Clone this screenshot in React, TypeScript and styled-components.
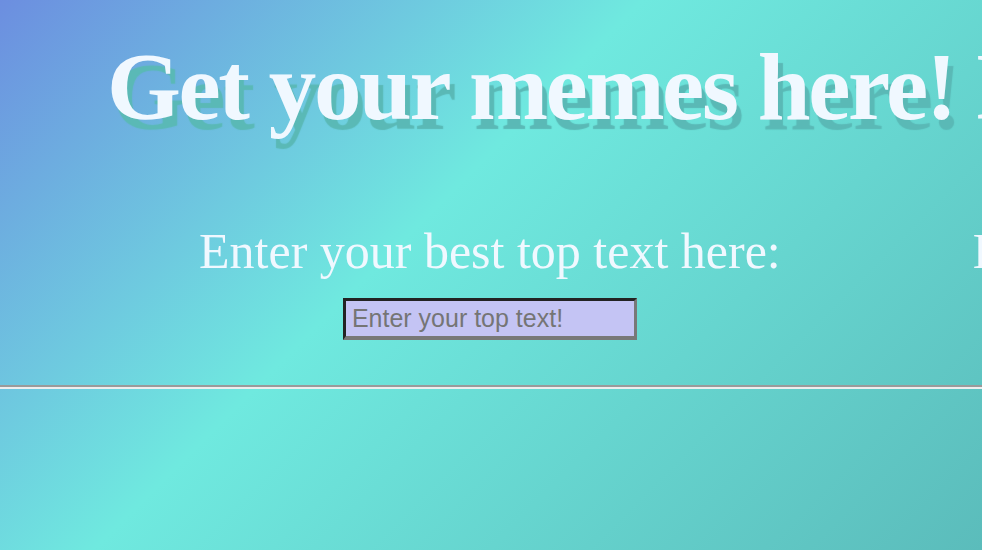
import React from "react";
import styled, { createGlobalStyle } from "styled-components";

const Global = createGlobalStyle`
  html, body {
    margin: 0;
    padding: 0;
    overflow: hidden;
  }
  body {
    font-family: "Liberation Serif", "Times New Roman", serif;
  }
`;

const Page = styled.div`
  min-height: 100vh;
  width: 100vw;
  overflow: hidden;
  background: linear-gradient(135deg, #6c8ee0 0%, #6fe9df 42%, #5bbcbb 100%);
`;

const Title = styled.h1`
  margin: 32px 0 0;
  padding-left: 107px;
  font-family: "Liberation Serif", "Times New Roman", serif;
  font-size: 95px;
  font-weight: bold;
  letter-spacing: -2.4px;
  line-height: normal;
  color: aliceblue;
  white-space: nowrap;
  text-shadow: 5px 10px 1px #5ab9b6;
`;

const FormRow = styled.div`
  display: flex;
  gap: 192px;
  padding-left: 199px;
  margin-top: 80px;
  white-space: nowrap;
`;

const Field = styled.div`
  display: flex;
  flex-direction: column;
  align-items: center;
  gap: 18px;
  flex-shrink: 0;
`;

const Label = styled.label`
  font-family: "Liberation Serif", "Times New Roman", serif;
  font-size: 50px;
  line-height: normal;
  color: aliceblue;
`;

const TextInput = styled.input`
  box-sizing: border-box;
  width: 294px;
  height: 42px;
  padding: 0 6px;
  border-style: solid;
  border-width: 3px 3px 4px 3px;
  border-color: #232323 #787878 #787878 #232323;
  background: #c4c4f4;
  font-family: "Liberation Sans", Arial, sans-serif;
  font-size: 25px;
  color: #333;
  outline: none;
  &::placeholder {
    color: #757575;
  }
`;

const Rule = styled.hr`
  margin: 45px 0 0;
  border: 0;
  border-top: 2px solid #9a9a9a;
  border-bottom: 2px solid #eeeeee;
  height: 0;
`;

export default function App() {
  return (
    <Page>
      <Global />
      <Title>Get your memes here! Make them funny!</Title>
      <FormRow>
        <Field>
          <Label htmlFor="top">Enter your best top text here:</Label>
          <TextInput id="top" placeholder="Enter your top text!" />
        </Field>
        <Field>
          <Label htmlFor="bottom">Enter your best bottom text here:</Label>
          <TextInput id="bottom" placeholder="Enter your bottom text!" />
        </Field>
      </FormRow>
      <Rule />
    </Page>
  );
}
